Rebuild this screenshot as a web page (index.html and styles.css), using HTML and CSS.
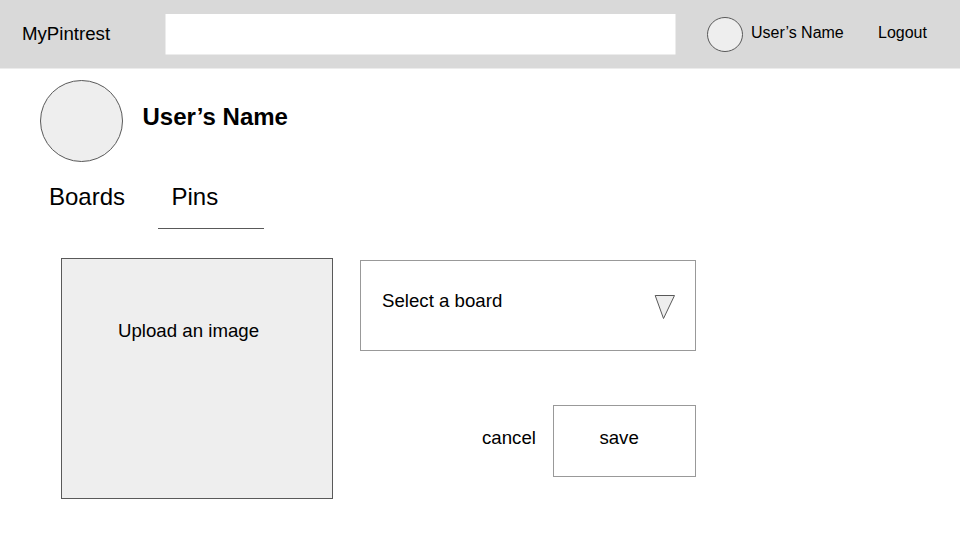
FILE: index.html
```
<!DOCTYPE html>
<html lang="en">
<head>
<meta charset="utf-8">
<title>MyPintrest</title>
<link rel="stylesheet" href="styles.css">
</head>
<body>
<header class="topbar">
  <div class="brand">MyPintrest</div>
  <svg class="search" viewBox="0 0 511 41"><rect x=".5" width="510" height="40.5"/></svg>
  <svg class="avatar-small" viewBox="0 0 36 36"><ellipse cx="18" cy="17.5" rx="17.5" ry="17"/></svg>
  <div class="account">User’s Name</div>
  <div class="logout">Logout</div>
</header>
<section class="profile">
  <svg class="avatar-large" viewBox="0 0 84 83"><ellipse cx="41.5" cy="41" rx="41" ry="40.5"/></svg>
  <h1 class="name">User’s Name</h1>
</section>
<nav class="tabs">
  <div class="tab boards">Boards</div>
  <div class="tab active">Pins</div>
</nav>
<main class="editor">
  <div class="upload">Upload an image</div>
  <div class="form">
    <div class="select">
      <span>Select a board</span>
      <svg class="arrow" viewBox="0 0 21 26"><path d="M1.2 1.5H20.5L9.5 24.5Z"/></svg>
    </div>
    <div class="actions">
      <div class="cancel">cancel</div>
      <div class="save">save</div>
    </div>
  </div>
</main>
</body>
</html>
```
FILE: styles.css
```
* { box-sizing: border-box; }
body {
  margin: 0;
  height: 540px;
  overflow: hidden;
  background: #fff;
  color: #000;
  font-family: "Liberation Sans", Arial, sans-serif;
  font-size: 18.67px;
  line-height: 22px;
}
svg { display: block; flex: none; fill: #eee; stroke: #595959; stroke-width: 1; }
.topbar {
  display: flex;
  height: 69px;
  padding-left: 22px;
  background: linear-gradient(#d9d9d9 68px, #ececec 68px);
  white-space: nowrap;
}
.brand { width: 143px; padding-top: 23px; }
.search { width: 511px; height: 41px; margin-top: 14px; fill: #fff; stroke: none; }
.avatar-small { width: 36px; height: 36px; margin: 17px 8px 0 31px; }
.account { width: 127px; padding-top: 22px; font-size: 16px; }
.logout { padding-top: 22px; font-size: 16px; }
.profile { display: flex; height: 93px; padding: 11px 0 0 40px; }
.avatar-large { width: 84px; height: 83px; }
.name { margin: 23px 0 0 18.5px; font-size: 24px; line-height: 28px; }
.tabs { display: flex; height: 67px; padding-left: 49px; font-size: 24px; line-height: 28px; }
.tab { padding-top: 21px; }
.boards { width: 108.5px; }
.active { width: 106px; padding-left: 14px; border-bottom: 1px solid #595959; }
.editor { display: flex; gap: 27px; padding: 29px 0 0 61px; }
.upload {
  width: 272px;
  height: 241px;
  padding: 61px 0 0 56px;
  background: #eee;
  border: 1px solid #595959;
}
.form { width: 336px; padding-top: 2px; }
.select {
  display: flex;
  justify-content: space-between;
  height: 91px;
  padding: 29px 20px 0 21px;
  border: 1px solid #999;
}
.arrow { width: 21px; height: 26px; margin-top: 4px; }
.actions { display: flex; justify-content: flex-end; margin-top: 54px; }
.cancel { width: 71px; padding-top: 22px; }
.save { width: 143px; height: 72px; padding: 21px 0 0 45.4px; border: 1px solid #999; }
```
